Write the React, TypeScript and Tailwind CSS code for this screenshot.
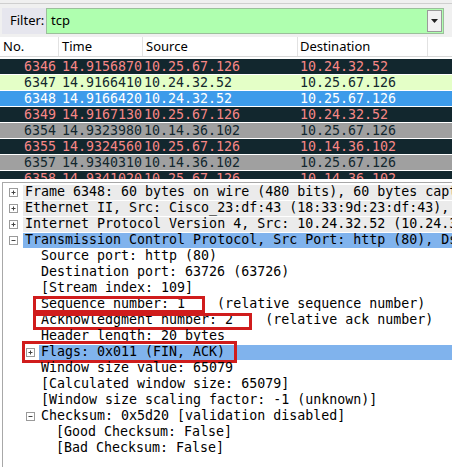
import React from "react"

const mono = { fontFamily: '"DejaVu Sans Mono", "Liberation Mono", monospace' }

type Pkt = { no: string; time: string; src: string; dst: string; kind: "bad" | "tcp" | "sel" | "fin" }

const packets: Pkt[] = [
  { no: "6346", time: "14.9156870", src: "10.25.67.126", dst: "10.24.32.52", kind: "bad" },
  { no: "6347", time: "14.9166410", src: "10.24.32.52", dst: "10.25.67.126", kind: "tcp" },
  { no: "6348", time: "14.9166420", src: "10.24.32.52", dst: "10.25.67.126", kind: "sel" },
  { no: "6349", time: "14.9167130", src: "10.25.67.126", dst: "10.24.32.52", kind: "bad" },
  { no: "6354", time: "14.9323980", src: "10.14.36.102", dst: "10.25.67.126", kind: "fin" },
  { no: "6355", time: "14.9324560", src: "10.25.67.126", dst: "10.14.36.102", kind: "bad" },
  { no: "6357", time: "14.9340310", src: "10.14.36.102", dst: "10.25.67.126", kind: "fin" },
  { no: "6358", time: "14.9341020", src: "10.25.67.126", dst: "10.14.36.102", kind: "bad" },
]

const rowColor: Record<Pkt["kind"], string> = {
  bad: "bg-[#12272e] text-[#f78787]",
  tcp: "bg-[#e4ffc7] text-[#12272e]",
  sel: "bg-[#3d9bea] text-white",
  fin: "bg-[#a0a0a0] text-[#12272e]",
}

function Box({ open }: { open?: boolean }) {
  return (
    <span className="w-[9px] h-[9px] border border-[#9a9a9a] bg-white flex items-center justify-center">
      <svg width="7" height="7" viewBox="0 0 7 7">
        <path d="M1.5 3.5h4" stroke="#444" strokeWidth="1" />
        {!open && <path d="M3.5 1.5v4" stroke="#444" strokeWidth="1" />}
      </svg>
    </span>
  )
}

function Top({ text, open, blue }: { text: string; open?: boolean; blue?: boolean }) {
  return (
    <div className="h-[16px] flex items-center">
      <div className="w-[20px] flex justify-center pl-[1px]">
        <Box open={open} />
      </div>
      <div
        className={`flex-1 h-[15px] flex items-center pl-[2px] whitespace-pre overflow-hidden ${
          blue ? "bg-[#80b3ed]" : "bg-[#ebebeb]"
        }`}
      >
        {text}
      </div>
    </div>
  )
}

function Leaf({ text, indent = 38, box }: { text: string; indent?: number; box?: string }) {
  return (
    <div className="h-[16px] flex items-center relative whitespace-pre" style={{ paddingLeft: indent }}>
      {text}
      {box && <div className={`absolute border-[3px] border-[#d01c1c] ${box}`} />}
    </div>
  )
}

export default function App() {
  return (
    <div className="w-[452px] h-[467px] bg-white overflow-hidden relative" style={{ fontFamily: '"Noto Sans", "DejaVu Sans", sans-serif' }}>
      {/* top strip */}
      <div className="h-[4px] bg-[#f0f0f0] border-b border-[#cfcfcf]" />

      {/* filter bar */}
      <div className="h-[33px] bg-[#f0f0f0] flex items-center pl-[2px] pr-[8px]">
        <div className="h-[26px] w-[44px] bg-[#e6e6ee] flex items-center pl-[8px] text-[13px] text-black">Filter:</div>
        <div className="flex-1 h-[26px] bg-[#afffaf] border border-[#9bbf9b] flex items-center pl-[4px] text-[13px] text-black relative">
          tcp
          <div className="absolute right-[1px] top-[1px] bottom-[1px] w-[15px] bg-[#f2f2f2] border border-[#9a9a9a] flex items-center justify-center">
            <svg width="7" height="4" viewBox="0 0 7 4">
              <path d="M0 0h7L3.5 4z" fill="#222" />
            </svg>
          </div>
        </div>
      </div>

      {/* column header */}
      <div className="h-[20px] flex text-[13px] text-black bg-white border-b border-[#d8d8d8]">
        <div className="w-[59px] pl-[3px] border-r border-[#e2e2e2] flex items-center">No.</div>
        <div className="w-[84px] pl-[3px] border-r border-[#e2e2e2] flex items-center">Time</div>
        <div className="w-[155px] pl-[3px] border-r border-[#e2e2e2] flex items-center">Source</div>
        <div className="w-[130px] pl-[2px] border-r border-[#e2e2e2] flex items-center">Destination</div>
      </div>

      {/* packet list */}
      <div className="h-[122px] overflow-hidden pt-[2px] flex flex-col gap-[1px] text-[13.3px]" style={mono}>
        {packets.map((p) => (
          <div key={p.no} className={`h-[15px] shrink-0 flex items-center leading-none ${rowColor[p.kind]}`}>
            <span className="w-[58px] text-right pr-[2px]">{p.no}</span>
            <span className="w-[84px] pl-[4px]">{p.time}</span>
            <span className="w-[156px] pl-[2px]">{p.src}</span>
            <span className="pl-[2px]">{p.dst}</span>
          </div>
        ))}
      </div>

      {/* splitter */}
      <div className="h-[3px] bg-white" />

      {/* details */}
      <div className="ml-[2px] border-l border-t border-[#a8a8a8] pt-[1px] text-[13.3px] text-black leading-none" style={mono}>
        <Top text="Frame 6348: 60 bytes on wire (480 bits), 60 bytes captured (480 bits)" />
        <Top text="Ethernet II, Src: Cisco_23:df:43 (18:33:9d:23:df:43), Dst: Dell_5e:7b:10" />
        <Top text="Internet Protocol Version 4, Src: 10.24.32.52 (10.24.32.52), Dst: 10.25.67.126" />
        <Top text="Transmission Control Protocol, Src Port: http (80), Dst Port: 63726" open blue />
        <Leaf text="Source port: http (80)" />
        <Leaf text="Destination port: 63726 (63726)" />
        <Leaf text="[Stream index: 109]" />
        <Leaf text="Sequence number: 1    (relative sequence number)" box="left-[30px] top-[0px] w-[172px] h-[17px]" />
        <Leaf text="Acknowledgment number: 2    (relative ack number)" box="left-[30px] top-[1px] w-[219px] h-[17px]" />
        <Leaf text="Header length: 20 bytes" />
        <div className="h-[16px] flex items-center relative">
          <div className="w-[36px] flex justify-end pr-[4px]">
            <Box />
          </div>
          <div className="flex-1 h-[15px] bg-[#80b3ed] flex items-center pl-[2px] whitespace-pre">Flags: 0x011 (FIN, ACK)</div>
          <div className="absolute border-[3px] border-[#d01c1c] left-[19px] top-[-3px] w-[215px] h-[22px]" />
        </div>
        <Leaf text="Window size value: 65079" />
        <Leaf text="[Calculated window size: 65079]" />
        <Leaf text="[Window size scaling factor: -1 (unknown)]" />
        <div className="h-[16px] flex items-center">
          <div className="w-[36px] flex justify-end pr-[4px]">
            <Box open />
          </div>
          <div className="pl-[2px] whitespace-pre">Checksum: 0x5d20 [validation disabled]</div>
        </div>
        <Leaf text="[Good Checksum: False]" indent={53} />
        <Leaf text="[Bad Checksum: False]" indent={53} />
        <div className="h-[40px]" />
      </div>
    </div>
  )
}
